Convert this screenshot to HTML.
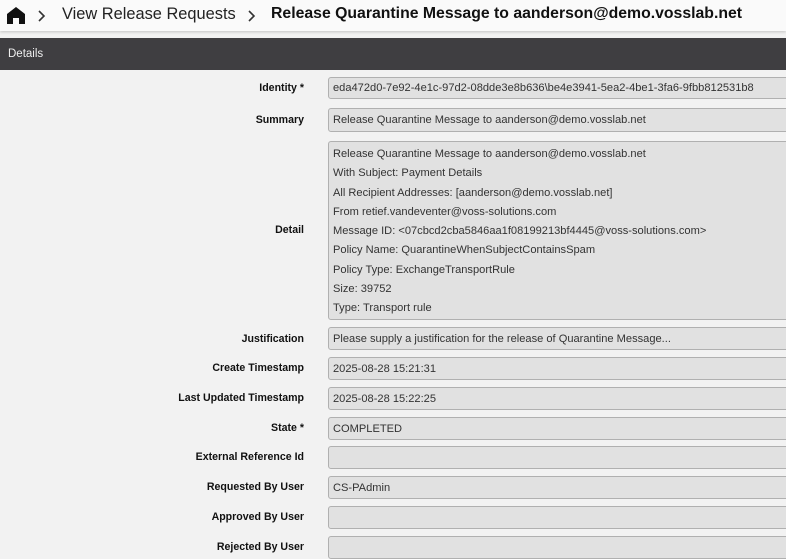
<!DOCTYPE html><html><head><style>
body{margin:0;width:786px;height:557px;overflow:hidden;background:#f2f2f2;font-family:"Liberation Sans",sans-serif;position:relative}
.top{position:absolute;left:0;top:0;width:786px;height:31px;background:#fafafa;box-shadow:0 1px 3px rgba(0,0,0,.2)}
.bc{position:absolute;top:5px;font-size:16.4px;color:#222;white-space:nowrap}
.bar{position:absolute;left:0;top:38px;width:786px;height:32px;background:#3f3e41;color:#eee;font-size:11.5px;line-height:32px;padding-left:8px;box-sizing:border-box}
.l{position:absolute;right:482px;font-size:10.6px;font-weight:bold;color:#111;white-space:nowrap}
.i{position:absolute;left:328px;width:470px;background:#e1e1e1;border:1px solid #b0b0b0;border-radius:3px;box-sizing:border-box;font-size:11.1px;color:#333;padding-left:4px;white-space:nowrap}
</style></head><body>
<div class="top">
<svg style="position:absolute;left:7px;top:7px" width="18" height="17" viewBox="0 0 18 17"><path d="M9 0L0 7v10h6v-6h6v6h6V7z" fill="#111"/></svg>
<svg style="position:absolute;left:38px;top:10px" width="8" height="12"><path d="M1 1l5 5-5 5" stroke="#333" stroke-width="1.6" fill="none"/></svg>
<div class="bc" style="left:62px">View Release Requests</div>
<svg style="position:absolute;left:248px;top:10px" width="8" height="12"><path d="M1 1l5 5-5 5" stroke="#333" stroke-width="1.6" fill="none"/></svg>
<div class="bc" style="left:271px;font-weight:bold;color:#111;font-size:15.8px;top:5px">Release Quarantine Message to aanderson@demo.vosslab.net</div>
</div>
<div class="bar">Details</div>

<div class="l" style="top:82px">Identity *</div><div class="i" style="top:77px;height:22px;line-height:21px">eda472d0-7e92-4e1c-97d2-08dde3e8b636\be4e3941-5ea2-4be1-3fa6-9fbb812531b8</div>
<div class="l" style="top:114px">Summary</div><div class="i" style="top:108px;height:24px;line-height:23px">Release Quarantine Message to aanderson@demo.vosslab.net</div>
<div class="l" style="top:224px">Detail</div><div class="i" style="top:141px;height:179px;line-height:19.3px;padding-top:3px">Release Quarantine Message to aanderson@demo.vosslab.net<br>With Subject: Payment Details<br>All Recipient Addresses: [aanderson@demo.vosslab.net]<br>From retief.vandeventer@voss-solutions.com<br>Message ID: &lt;07cbcd2cba5846aa1f08199213bf4445@voss-solutions.com&gt;<br>Policy Name: QuarantineWhenSubjectContainsSpam<br>Policy Type: ExchangeTransportRule<br>Size: 39752<br>Type: Transport rule</div>
<div class="l" style="top:333px">Justification</div><div class="i" style="top:327px;height:23px;line-height:22px">Please supply a justification for the release of Quarantine Message...</div>
<div class="l" style="top:362px">Create Timestamp</div><div class="i" style="top:357px;height:23px;line-height:22px">2025-08-28 15:21:31</div>
<div class="l" style="top:392px">Last Updated Timestamp</div><div class="i" style="top:387px;height:23px;line-height:22px">2025-08-28 15:22:25</div>
<div class="l" style="top:422px">State *</div><div class="i" style="top:417px;height:23px;line-height:22px">COMPLETED</div>
<div class="l" style="top:451px">External Reference Id</div><div class="i" style="top:446px;height:23px"></div>
<div class="l" style="top:481px">Requested By User</div><div class="i" style="top:476px;height:23px;line-height:22px">CS-PAdmin</div>
<div class="l" style="top:511px">Approved By User</div><div class="i" style="top:506px;height:23px"></div>
<div class="l" style="top:541px">Rejected By User</div><div class="i" style="top:536px;height:23px"></div>
</body></html>
